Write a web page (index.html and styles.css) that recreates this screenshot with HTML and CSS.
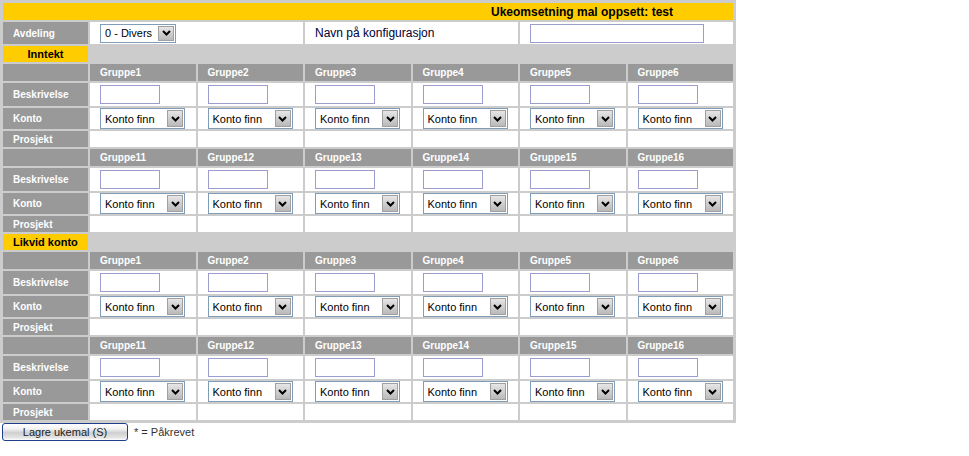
FILE: index.html
```html
<!DOCTYPE html>
<html>
<head>
<meta charset="utf-8">
<link rel="stylesheet" href="styles.css">
</head>
<body>
<table class="grid">
  <colgroup><col class="c-label"><col span="6"></colgroup>
  <tr class="r-title"><td colspan="7" class="title">Ukeomsetning mal oppsett: test</td></tr>
  <tr class="r-field">
    <td class="lbl">Avdeling</td>
    <td colspan="2" class="val"><span class="sel sel-dept"><span class="sel-text">0 - Divers</span><span class="arr"><svg width="9" height="6" viewBox="0 0 9 6"><path d="M1 1 L4.5 4.5 L8 1" fill="none" stroke="#000" stroke-width="2"/></svg></span></span></td>
    <td colspan="2" class="val plain">Navn på konfigurasjon</td>
    <td colspan="2" class="val"><input class="txt txt-name" type="text"></td>
  </tr>
  <tr class="r-sec"><td class="sec center">Inntekt</td><td colspan="6" class="fill"></td></tr>
  <tr class="r-head"><td class="lbl"></td><td class="gh">Gruppe1</td><td class="gh">Gruppe2</td><td class="gh">Gruppe3</td><td class="gh">Gruppe4</td><td class="gh">Gruppe5</td><td class="gh">Gruppe6</td></tr>
  <tr class="r-desc"><td class="lbl">Beskrivelse</td><td class="val"><input class="txt" type="text"></td><td class="val"><input class="txt" type="text"></td><td class="val"><input class="txt" type="text"></td><td class="val"><input class="txt" type="text"></td><td class="val"><input class="txt" type="text"></td><td class="val"><input class="txt" type="text"></td></tr>
  <tr class="r-acc"><td class="lbl">Konto</td>
    <td class="val"><span class="sel"><span class="sel-text">Konto finn</span><span class="arr"><svg width="9" height="6" viewBox="0 0 9 6"><path d="M1 1 L4.5 4.5 L8 1" fill="none" stroke="#000" stroke-width="2"/></svg></span></span></td>
    <td class="val"><span class="sel"><span class="sel-text">Konto finn</span><span class="arr"><svg width="9" height="6" viewBox="0 0 9 6"><path d="M1 1 L4.5 4.5 L8 1" fill="none" stroke="#000" stroke-width="2"/></svg></span></span></td>
    <td class="val"><span class="sel"><span class="sel-text">Konto finn</span><span class="arr"><svg width="9" height="6" viewBox="0 0 9 6"><path d="M1 1 L4.5 4.5 L8 1" fill="none" stroke="#000" stroke-width="2"/></svg></span></span></td>
    <td class="val"><span class="sel"><span class="sel-text">Konto finn</span><span class="arr"><svg width="9" height="6" viewBox="0 0 9 6"><path d="M1 1 L4.5 4.5 L8 1" fill="none" stroke="#000" stroke-width="2"/></svg></span></span></td>
    <td class="val"><span class="sel"><span class="sel-text">Konto finn</span><span class="arr"><svg width="9" height="6" viewBox="0 0 9 6"><path d="M1 1 L4.5 4.5 L8 1" fill="none" stroke="#000" stroke-width="2"/></svg></span></span></td>
    <td class="val"><span class="sel"><span class="sel-text">Konto finn</span><span class="arr"><svg width="9" height="6" viewBox="0 0 9 6"><path d="M1 1 L4.5 4.5 L8 1" fill="none" stroke="#000" stroke-width="2"/></svg></span></span></td>
  </tr>
  <tr class="r-proj"><td class="lbl">Prosjekt</td><td class="val"></td><td class="val"></td><td class="val"></td><td class="val"></td><td class="val"></td><td class="val"></td></tr>
  <tr class="r-head"><td class="lbl"></td><td class="gh">Gruppe11</td><td class="gh">Gruppe12</td><td class="gh">Gruppe13</td><td class="gh">Gruppe14</td><td class="gh">Gruppe15</td><td class="gh">Gruppe16</td></tr>
  <tr class="r-desc"><td class="lbl">Beskrivelse</td><td class="val"><input class="txt" type="text"></td><td class="val"><input class="txt" type="text"></td><td class="val"><input class="txt" type="text"></td><td class="val"><input class="txt" type="text"></td><td class="val"><input class="txt" type="text"></td><td class="val"><input class="txt" type="text"></td></tr>
  <tr class="r-acc"><td class="lbl">Konto</td>
    <td class="val"><span class="sel"><span class="sel-text">Konto finn</span><span class="arr"><svg width="9" height="6" viewBox="0 0 9 6"><path d="M1 1 L4.5 4.5 L8 1" fill="none" stroke="#000" stroke-width="2"/></svg></span></span></td>
    <td class="val"><span class="sel"><span class="sel-text">Konto finn</span><span class="arr"><svg width="9" height="6" viewBox="0 0 9 6"><path d="M1 1 L4.5 4.5 L8 1" fill="none" stroke="#000" stroke-width="2"/></svg></span></span></td>
    <td class="val"><span class="sel"><span class="sel-text">Konto finn</span><span class="arr"><svg width="9" height="6" viewBox="0 0 9 6"><path d="M1 1 L4.5 4.5 L8 1" fill="none" stroke="#000" stroke-width="2"/></svg></span></span></td>
    <td class="val"><span class="sel"><span class="sel-text">Konto finn</span><span class="arr"><svg width="9" height="6" viewBox="0 0 9 6"><path d="M1 1 L4.5 4.5 L8 1" fill="none" stroke="#000" stroke-width="2"/></svg></span></span></td>
    <td class="val"><span class="sel"><span class="sel-text">Konto finn</span><span class="arr"><svg width="9" height="6" viewBox="0 0 9 6"><path d="M1 1 L4.5 4.5 L8 1" fill="none" stroke="#000" stroke-width="2"/></svg></span></span></td>
    <td class="val"><span class="sel"><span class="sel-text">Konto finn</span><span class="arr"><svg width="9" height="6" viewBox="0 0 9 6"><path d="M1 1 L4.5 4.5 L8 1" fill="none" stroke="#000" stroke-width="2"/></svg></span></span></td>
  </tr>
  <tr class="r-proj"><td class="lbl">Prosjekt</td><td class="val"></td><td class="val"></td><td class="val"></td><td class="val"></td><td class="val"></td><td class="val"></td></tr>
  <tr class="r-sec"><td class="sec">Likvid konto</td><td colspan="6" class="fill"></td></tr>
  <tr class="r-head"><td class="lbl"></td><td class="gh">Gruppe1</td><td class="gh">Gruppe2</td><td class="gh">Gruppe3</td><td class="gh">Gruppe4</td><td class="gh">Gruppe5</td><td class="gh">Gruppe6</td></tr>
  <tr class="r-desc"><td class="lbl">Beskrivelse</td><td class="val"><input class="txt" type="text"></td><td class="val"><input class="txt" type="text"></td><td class="val"><input class="txt" type="text"></td><td class="val"><input class="txt" type="text"></td><td class="val"><input class="txt" type="text"></td><td class="val"><input class="txt" type="text"></td></tr>
  <tr class="r-acc"><td class="lbl">Konto</td>
    <td class="val"><span class="sel"><span class="sel-text">Konto finn</span><span class="arr"><svg width="9" height="6" viewBox="0 0 9 6"><path d="M1 1 L4.5 4.5 L8 1" fill="none" stroke="#000" stroke-width="2"/></svg></span></span></td>
    <td class="val"><span class="sel"><span class="sel-text">Konto finn</span><span class="arr"><svg width="9" height="6" viewBox="0 0 9 6"><path d="M1 1 L4.5 4.5 L8 1" fill="none" stroke="#000" stroke-width="2"/></svg></span></span></td>
    <td class="val"><span class="sel"><span class="sel-text">Konto finn</span><span class="arr"><svg width="9" height="6" viewBox="0 0 9 6"><path d="M1 1 L4.5 4.5 L8 1" fill="none" stroke="#000" stroke-width="2"/></svg></span></span></td>
    <td class="val"><span class="sel"><span class="sel-text">Konto finn</span><span class="arr"><svg width="9" height="6" viewBox="0 0 9 6"><path d="M1 1 L4.5 4.5 L8 1" fill="none" stroke="#000" stroke-width="2"/></svg></span></span></td>
    <td class="val"><span class="sel"><span class="sel-text">Konto finn</span><span class="arr"><svg width="9" height="6" viewBox="0 0 9 6"><path d="M1 1 L4.5 4.5 L8 1" fill="none" stroke="#000" stroke-width="2"/></svg></span></span></td>
    <td class="val"><span class="sel"><span class="sel-text">Konto finn</span><span class="arr"><svg width="9" height="6" viewBox="0 0 9 6"><path d="M1 1 L4.5 4.5 L8 1" fill="none" stroke="#000" stroke-width="2"/></svg></span></span></td>
  </tr>
  <tr class="r-proj"><td class="lbl">Prosjekt</td><td class="val"></td><td class="val"></td><td class="val"></td><td class="val"></td><td class="val"></td><td class="val"></td></tr>
  <tr class="r-head"><td class="lbl"></td><td class="gh">Gruppe11</td><td class="gh">Gruppe12</td><td class="gh">Gruppe13</td><td class="gh">Gruppe14</td><td class="gh">Gruppe15</td><td class="gh">Gruppe16</td></tr>
  <tr class="r-desc"><td class="lbl">Beskrivelse</td><td class="val"><input class="txt" type="text"></td><td class="val"><input class="txt" type="text"></td><td class="val"><input class="txt" type="text"></td><td class="val"><input class="txt" type="text"></td><td class="val"><input class="txt" type="text"></td><td class="val"><input class="txt" type="text"></td></tr>
  <tr class="r-acc"><td class="lbl">Konto</td>
    <td class="val"><span class="sel"><span class="sel-text">Konto finn</span><span class="arr"><svg width="9" height="6" viewBox="0 0 9 6"><path d="M1 1 L4.5 4.5 L8 1" fill="none" stroke="#000" stroke-width="2"/></svg></span></span></td>
    <td class="val"><span class="sel"><span class="sel-text">Konto finn</span><span class="arr"><svg width="9" height="6" viewBox="0 0 9 6"><path d="M1 1 L4.5 4.5 L8 1" fill="none" stroke="#000" stroke-width="2"/></svg></span></span></td>
    <td class="val"><span class="sel"><span class="sel-text">Konto finn</span><span class="arr"><svg width="9" height="6" viewBox="0 0 9 6"><path d="M1 1 L4.5 4.5 L8 1" fill="none" stroke="#000" stroke-width="2"/></svg></span></span></td>
    <td class="val"><span class="sel"><span class="sel-text">Konto finn</span><span class="arr"><svg width="9" height="6" viewBox="0 0 9 6"><path d="M1 1 L4.5 4.5 L8 1" fill="none" stroke="#000" stroke-width="2"/></svg></span></span></td>
    <td class="val"><span class="sel"><span class="sel-text">Konto finn</span><span class="arr"><svg width="9" height="6" viewBox="0 0 9 6"><path d="M1 1 L4.5 4.5 L8 1" fill="none" stroke="#000" stroke-width="2"/></svg></span></span></td>
    <td class="val"><span class="sel"><span class="sel-text">Konto finn</span><span class="arr"><svg width="9" height="6" viewBox="0 0 9 6"><path d="M1 1 L4.5 4.5 L8 1" fill="none" stroke="#000" stroke-width="2"/></svg></span></span></td>
  </tr>
  <tr class="r-proj"><td class="lbl">Prosjekt</td><td class="val"></td><td class="val"></td><td class="val"></td><td class="val"></td><td class="val"></td><td class="val"></td></tr>
</table>
<div class="footer">
  <button class="btn" type="button">Lagre ukemal (S)</button>
  <span class="note">* = Påkrevet</span>
</div>
</body>
</html>
```
FILE: styles.css
```css
html, body {
  margin: 0;
  padding: 0;
  background: #fff;
  font-family: "Liberation Sans", Arial, sans-serif;
}

.grid {
  width: 736px;
  table-layout: fixed;
  border: 1px solid #ccc;
  border-spacing: 2px;
  background: #ccc;
}

.c-label { width: 85px; }

.grid td {
  padding: 0;
  vertical-align: middle;
  overflow: hidden;
  white-space: nowrap;
}

.r-title td { height: 17px; }
.r-field td { height: 22px; }
.r-sec td { height: 16px; }
.r-head td { height: 17px; }
.r-desc td { height: 23px; }
.r-acc td { height: 21px; }
.r-proj td { height: 16px; }

.title {
  background: #ffcc00;
  text-align: right;
  padding-right: 60px !important;
  font-size: 12px;
  font-weight: bold;
  color: #000;
}

.lbl {
  background: #999;
  color: #fff;
  font-size: 10px;
  font-weight: bold;
  padding-left: 10px !important;
}

.gh {
  background: #999;
  color: #fff;
  font-size: 10px;
  font-weight: bold;
  padding-left: 10px !important;
}

.val {
  background: #fff;
  padding-left: 10px !important;
  font-size: 0;
}

.plain {
  font-size: 12px;
  color: #000033;
}

.sec {
  background: #ffcc00;
  color: #000;
  font-size: 11px;
  font-weight: bold;
  padding-left: 10px !important;
}

.sec.center {
  text-align: center;
  padding-left: 0 !important;
}

.fill { background: #ccc; }

.txt {
  box-sizing: border-box;
  width: 60px;
  height: 19px;
  margin: 0;
  padding: 0 2px;
  border: 1px solid #9c9ccf;
  background: #fff;
  vertical-align: middle;
}

.txt-name { width: 174px; }

.sel {
  box-sizing: border-box;
  display: inline-flex;
  align-items: center;
  width: 85px;
  height: 21px;
  border: 1px solid #7f9db9;
  background: #fff;
  vertical-align: middle;
}

.sel-dept {
  width: 76px;
  height: 19px;
}

.sel-text {
  flex: 1;
  padding-left: 4px;
  font-size: 11px;
  color: #000;
  white-space: nowrap;
  overflow: hidden;
}

.arr {
  box-sizing: border-box;
  display: flex;
  align-items: center;
  justify-content: center;
  width: 16px;
  height: 17px;
  margin-right: 1px;
  border: 1px solid #a0a0a0;
  background: linear-gradient(#e6e6e6, #b9b9b9);
}

.sel-dept .arr {
  height: 15px;
}

.footer {
  display: flex;
  align-items: center;
  gap: 6px;
  padding-left: 2px;
}

.btn {
  box-sizing: border-box;
  width: 126px;
  height: 18px;
  margin: 0;
  padding: 0;
  border: 1px solid #1e3f8a;
  border-radius: 3px;
  background: linear-gradient(#ffffff 0%, #f3f3f3 30%, #cfcfcf 55%, #e4e4e4 85%, #ffffff 100%);
  font-family: "Liberation Sans", Arial, sans-serif;
  font-size: 11px;
  color: #222;
}

.note {
  font-size: 11px;
  color: #333;
}
```
